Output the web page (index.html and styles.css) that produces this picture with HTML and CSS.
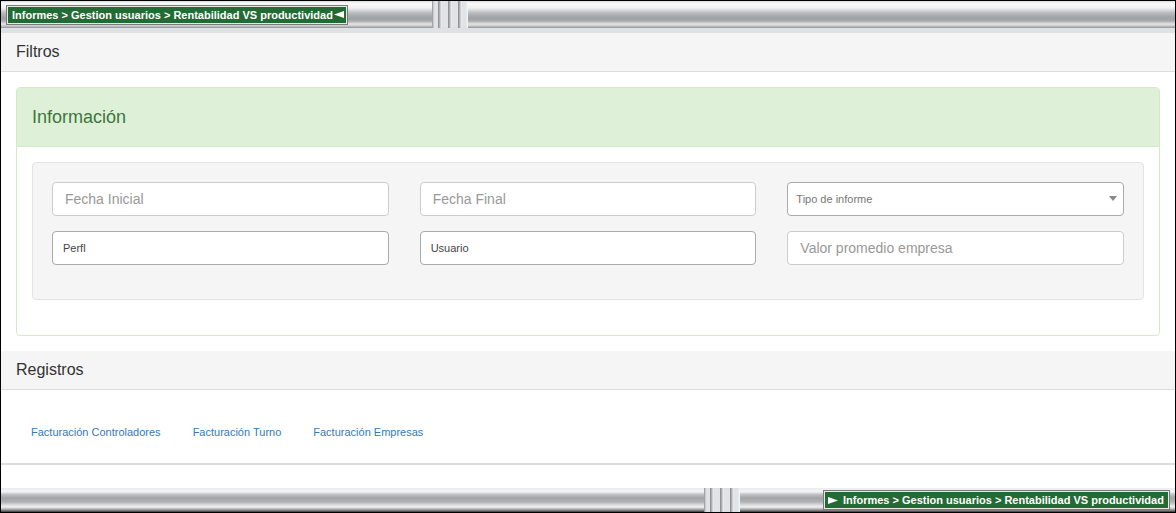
FILE: index.html
```html
<!DOCTYPE html>
<html lang="es">
<head>
<meta charset="utf-8">
<title>Rentabilidad VS productividad</title>
<link rel="stylesheet" href="styles.css">
</head>
<body>
<div class="frame">
  <div class="metal-bar top-bar">
    <div class="crumb crumb-top">
      <span class="crumb-text">Informes &gt; Gestion usuarios &gt; Rentabilidad VS productividad</span>
      <svg class="crumb-arrow" width="10" height="7" viewBox="0 0 10 7"><polygon points="0,3.5 10,0 10,7" fill="#fff"/></svg>
    </div>
    <div class="grip grip-top"><span class="ridge"></span><span class="ridge"></span><span class="ridge"></span></div>
  </div>
  <div class="stripe"></div>

  <div class="section-head">Filtros</div>

  <div class="panel">
    <div class="panel-head">Información</div>
    <div class="panel-body">
      <div class="well">
        <div class="field-row">
          <div class="field field-text"><span class="ph">Fecha Inicial</span></div>
          <div class="field field-text"><span class="ph">Fecha Final</span></div>
          <div class="field field-select field-select-ph">
            <span class="sel-ph">Tipo de informe</span>
            <svg class="caret" width="8" height="5" viewBox="0 0 8 5"><polygon points="0,0 8,0 4,5" fill="#888"/></svg>
          </div>
        </div>
        <div class="field-row">
          <div class="field field-select"><span class="sel-val">Perfl</span></div>
          <div class="field field-select"><span class="sel-val">Usuario</span></div>
          <div class="field field-text"><span class="ph">Valor promedio empresa</span></div>
        </div>
      </div>
    </div>
  </div>

  <div class="section-head reg-head">Registros</div>
  <div class="links">
    <a class="link" href="#">Facturación Controladores</a>
    <a class="link" href="#">Facturación Turno</a>
    <a class="link" href="#">Facturación Empresas</a>
  </div>

  <div class="spacer"></div>

  <div class="metal-bar bottom-bar">
    <div class="grip grip-bottom"><span class="ridge"></span><span class="ridge"></span><span class="ridge"></span></div>
    <div class="crumb crumb-bottom">
      <svg class="crumb-arrow-r" width="10" height="7" viewBox="0 0 10 7"><polygon points="0,0 10,3.5 0,7" fill="#fff"/></svg>
      <span class="crumb-text">Informes &gt; Gestion usuarios &gt; Rentabilidad VS productividad</span>
    </div>
  </div>
</div>
</body>
</html>
```
FILE: styles.css
```css
* { box-sizing: border-box; }
html, body { margin: 0; padding: 0; background: #fff; }
body { font-family: "Liberation Sans", Arial, sans-serif; color: #333; }

.frame {
  width: 1176px;
  height: 513px;
  border: 1px solid #000;
  display: flex;
  flex-direction: column;
  overflow: hidden;
}

.metal-bar { display: flex; align-items: center; flex: none; }

.top-bar {
  height: 27px;
  background: linear-gradient(to bottom,
    #d0d0d0 0px, #eeeeee 1px, #fafafa 3px, #f0f0f0 7px,
    #b8babc 12px, #9ea2a5 17px, #a9acaf 20px, #e4e4e4 23px,
    #c8c8c8 25px, #8e9092 27px);
}
.bottom-bar {
  height: 24px;
  background: linear-gradient(to bottom,
    #ececec 0px, #f4f4f4 4px, #c4c6c8 6px, #a2a5a8 10px,
    #b0b3b5 14px, #dcdcdc 17px, #f0f0f0 19px, #b5b5b5 21px,
    #6a6a6a 23px, #333 24px);
}

.stripe { height: 5px; background: #dfe2e5; flex: none; }

.crumb {
  display: flex;
  align-items: center;
  height: 18px;
  background: #236b34;
  border: 1px solid #e8e8e8;
  box-shadow: 0 0 0 1px #7a7a7a;
  color: #fff;
  font-weight: bold;
  font-size: 11px;
  white-space: nowrap;
}
.crumb-top { margin-left: 6px; padding: 0 2px 0 4px; }
.crumb-arrow { margin-left: 1px; }
.crumb-bottom { margin-left: 84px; padding: 0 4px 0 3px; }
.crumb-arrow-r { margin-right: 5px; }

.grip {
  height: 27px;
  width: 36px;
  background: #e1e4e7;
  display: flex;
  align-items: stretch;
  justify-content: center;
  gap: 6px;
  box-shadow: inset 2px 0 2px -1px #8a8d90, inset -2px 0 2px -1px #f8f8f8;
}
.grip-top { margin-left: 85px; }
.grip-bottom { margin-left: 703px; height: 24px; }
.ridge {
  width: 4px;
  background: linear-gradient(to right, #7f8386, #c9cbcd 60%, #f6f6f6);
}

.section-head {
  flex: none;
  height: 39px;
  line-height: 38px;
  padding-left: 15px;
  background: #f5f5f5;
  border-bottom: 1px solid #ddd;
  font-size: 16px;
  color: #333;
}

.panel {
  flex: none;
  margin: 15px 15px 15px;
  border: 1px solid #d6e9c6;
  border-radius: 4px;
  overflow: hidden;
}
.panel-head {
  height: 59px;
  line-height: 58px;
  background: #dff0d8;
  border-bottom: 1px solid #d6e9c6;
  color: #3c763d;
  font-size: 18px;
  padding-left: 15px;
}
.panel-body { padding: 15px; }

.well {
  background: #f5f5f5;
  border: 1px solid #e3e3e3;
  border-radius: 4px;
  padding: 19px;
  margin-bottom: 20px;
}
.field-row {
  display: grid;
  grid-template-columns: repeat(3, 1fr);
  column-gap: 31px;
  margin-bottom: 15px;
}
.field {
  height: 34px;
  background: #fff;
  border-radius: 4px;
  display: flex;
  align-items: center;
  position: relative;
}
.field-text { border: 1px solid #ccc; padding-left: 12px; }
.field-select { border: 1px solid #aaa; padding-left: 10px; }
.field-select-ph { padding-left: 8px; }
.ph { font-size: 14px; color: #999; }
.sel-val { font-size: 11px; color: #444; }
.sel-ph { font-size: 11px; color: #777; }
.caret { position: absolute; right: 6px; top: 13px; }

.links {
  flex: none;
  height: 75px;
  padding: 35px 0 0 30px;
  display: flex;
  gap: 32px;
  border-bottom: 2px solid #ddd;
}
.link {
  font-size: 11px;
  line-height: 15px;
  color: #337ab7;
  text-decoration: none;
  height: 15px;
}

.spacer { flex: 1; }
```
